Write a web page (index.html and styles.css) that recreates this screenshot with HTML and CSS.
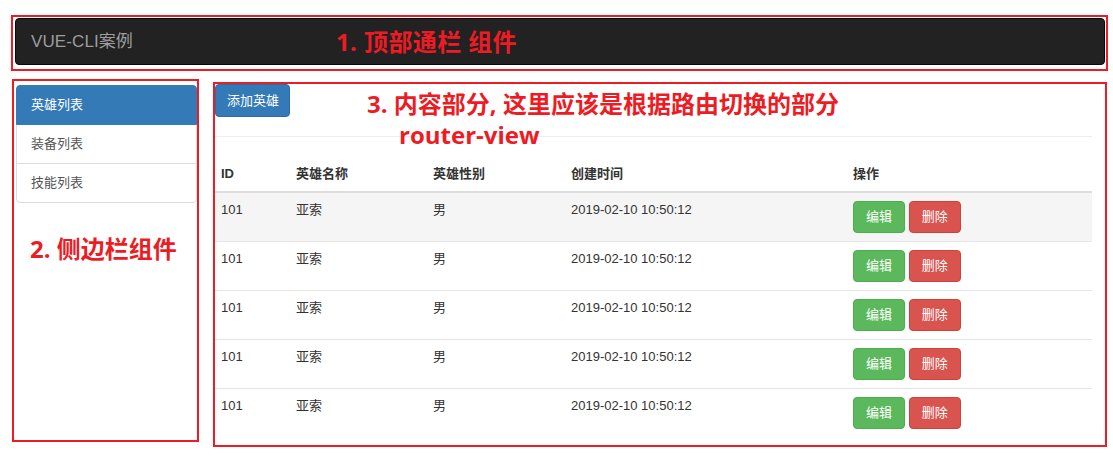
FILE: index.html
```html
<!DOCTYPE html>
<html lang="zh-CN">
<head>
<meta charset="utf-8">
<title>VUE-CLI案例</title>
<link rel="stylesheet" href="styles.css">
</head>
<body>
<div class="page">
  <div class="nav-frame">
    <nav class="navbar">
      <span class="brand">VUE-CLI案例</span>
      <span class="note note-nav">1. 顶部通栏 组件</span>
    </nav>
  </div>
  <div class="main">
    <aside class="side-frame">
      <ul class="list-group">
        <li class="list-item active">英雄列表</li>
        <li class="list-item">装备列表</li>
        <li class="list-item">技能列表</li>
      </ul>
      <p class="note note-side">2. 侧边栏组件</p>
    </aside>
    <section class="content-frame">
      <button class="btn btn-primary">添加英雄</button>
      <div class="note note-content">3. 内容部分, 这里应该是根据路由切换的部分<span class="note-sub">router-view</span></div>
      <hr class="divider">
      <table class="table">
        <colgroup>
          <col class="c-id"><col class="c-name"><col class="c-gender"><col class="c-time"><col class="c-ops">
        </colgroup>
        <thead>
          <tr><th>ID</th><th>英雄名称</th><th>英雄性别</th><th>创建时间</th><th>操作</th></tr>
        </thead>
        <tbody>
          <tr class="hover"><td>101</td><td>亚索</td><td>男</td><td>2019-02-10 10:50:12</td><td><button class="btn btn-success">编辑</button> <button class="btn btn-danger">删除</button></td></tr>
          <tr><td>101</td><td>亚索</td><td>男</td><td>2019-02-10 10:50:12</td><td><button class="btn btn-success">编辑</button> <button class="btn btn-danger">删除</button></td></tr>
          <tr><td>101</td><td>亚索</td><td>男</td><td>2019-02-10 10:50:12</td><td><button class="btn btn-success">编辑</button> <button class="btn btn-danger">删除</button></td></tr>
          <tr><td>101</td><td>亚索</td><td>男</td><td>2019-02-10 10:50:12</td><td><button class="btn btn-success">编辑</button> <button class="btn btn-danger">删除</button></td></tr>
          <tr><td>101</td><td>亚索</td><td>男</td><td>2019-02-10 10:50:12</td><td><button class="btn btn-success">编辑</button> <button class="btn btn-danger">删除</button></td></tr>
        </tbody>
      </table>
    </section>
  </div>
</div>
</body>
</html>
```

FILE: styles.css
```css
* { box-sizing: border-box; }

html, body {
  margin: 0;
  padding: 0;
  background: #fff;
}

body {
  font-family: "Liberation Sans", "Noto Sans CJK SC", sans-serif;
  font-size: 13px;
  line-height: 18px;
  color: #333;
}

.page {
  width: 1113px;
  height: 459px;
  padding-top: 15px;
}

/* red annotation frames */
.nav-frame,
.side-frame,
.content-frame {
  border: 2px solid #ed1c24;
}

.note {
  font-family: "Open Sans", "Noto Sans CJK SC", sans-serif;
  font-weight: 700;
  color: #ed1c24;
  font-size: 24px;
  line-height: 30px;
  margin: 0;
}

/* top bar */
.nav-frame {
  margin-left: 11px;
  width: 1097px;
  height: 56px;
  padding: 1px 1px 4px 2px;
}

.navbar {
  height: 47px;
  display: flex;
  align-items: center;
  background: #222;
  border: 1px solid #080808;
  border-radius: 4px;
  padding-left: 15px;
}

.brand {
  font-size: 17px;
  color: #9d9d9d;
  letter-spacing: 0.1px;
}

.note-nav {
  margin-left: 203px;
  letter-spacing: 0.4px;
}

/* main area */
.main {
  display: flex;
  align-items: flex-start;
  gap: 14px;
  margin-left: 12px;
}

.side-frame {
  margin-top: 8px;
  width: 187px;
  height: 363px;
  padding: 4px 0 0 2px;
}

.list-group {
  list-style: none;
  margin: 0;
  padding: 0;
}

.list-item {
  padding: 10px 14px 10px;
  border: 1px solid #ddd;
  margin-bottom: -1px;
  color: #555;
  background: #fff;
}

.list-item:first-child {
  border-radius: 4px 4px 0 0;
}

.list-item:last-child {
  border-radius: 0 0 4px 4px;
  margin-bottom: 0;
}

.list-item.active {
  background: #337ab7;
  border-color: #337ab7;
  color: #fff;
  position: relative;
}

.note-side {
  margin: 31px 0 0 14px;
}

/* content */
.content-frame {
  position: relative;
  margin-top: 11px;
  width: 894px;
  height: 365px;
  padding: 0 13px 0 0;
}

.btn {
  display: inline-block;
  font-family: inherit;
  font-size: 13px;
  line-height: 18px;
  padding: 6px 12px;
  border: 1px solid transparent;
  border-radius: 4px;
  color: #fff;
  cursor: pointer;
  vertical-align: top;
}

.btn-primary {
  background: #337ab7;
  border-color: #2e6da4;
  padding: 7px 10px 6px 11px;
}

.btn-success {
  background: #5cb85c;
  border-color: #4cae4c;
  padding: 6px 12px 6px 12px;
}

.btn-danger {
  background: #d9534f;
  border-color: #d43f3a;
  padding: 6px 12px 6px 12px;
}

.note-content {
  position: absolute;
  left: 152px;
  top: 4px;
  line-height: 31px;
}

.note-sub {
  display: block;
  margin-left: 32px;
}

.divider {
  margin: 19px 0 20px;
  border: 0;
  border-top: 1px solid #eee;
}

.table {
  width: 877px;
  border-collapse: collapse;
  table-layout: fixed;
}

.c-id { width: 75px; }
.c-name { width: 137px; }
.c-gender { width: 138px; }
.c-time { width: 282px; }
.c-ops { width: 245px; }

.table th,
.table td {
  text-align: left;
  vertical-align: top;
  padding: 8px 5px 8px 6px;
  line-height: 18px;
  white-space: nowrap;
}

.table th {
  font-weight: 700;
  border-bottom: 2px solid #ddd;
}

.table td {
  border-top: 1px solid #e6e6e6;
}

.table tbody tr:first-child td {
  border-top: 0;
}

.table tr.hover td {
  background: #f5f5f5;
}
```
